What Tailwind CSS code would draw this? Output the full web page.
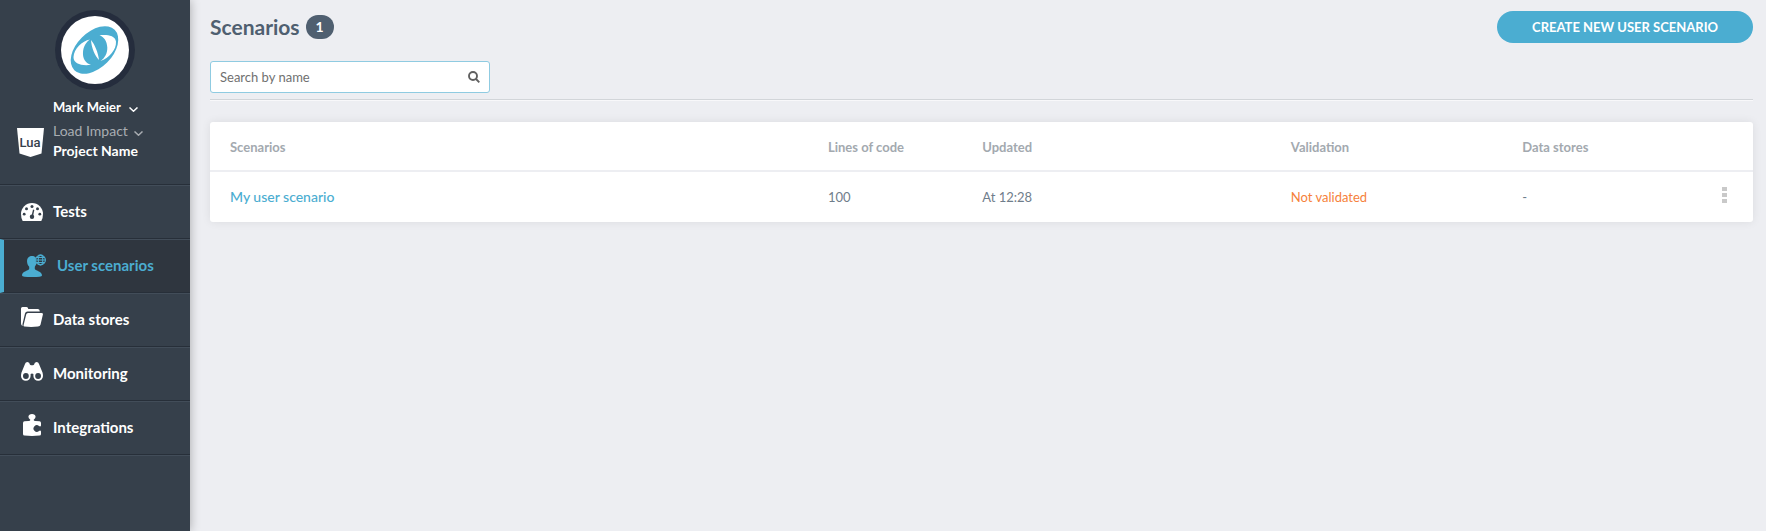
<!DOCTYPE html>
<html lang="en">
<head>
<meta charset="utf-8">
<meta name="viewport" content="width=device-width, initial-scale=1">
<title>User scenarios</title>
<script src="https://cdn.jsdelivr.net/npm/@tailwindcss/browser@4"></script>
</head>
<body class="flex min-h-screen bg-[#edeef2] font-['Lato',sans-serif] text-[13px] text-[#6f7d8b]">
<aside class="flex w-[190px] shrink-0 flex-col bg-[#36404b] text-white shadow-[0_0_10px_rgba(0,0,0,0.3)]">
  <div class="flex h-[185px] flex-col pt-[10px]">
    <svg class="size-20 self-center" viewBox="0 0 80 80" role="img" aria-label="Load Impact">
      <circle cx="40" cy="40" r="40" fill="#252d3d"/>
      <circle cx="40" cy="40" r="34" fill="#fff"/>
      <ellipse cx="39.5" cy="40" rx="28.5" ry="17.8" transform="rotate(-45 39.5 40)" fill="#4badd1"/>
      <path fill="#fff" d="M35 29.500C27 31 19 39 18.500 47C18.300 54 27 56 36 54.800C30 53 27.500 48 28 42C28.300 37 31 32 35 29.500ZM44.500 25.300C51 24.500 60 25 61 31.500C61.500 40 54 48 45.500 51C50 48 52.500 43 52.300 37.500C52 31 49 27 44.500 25.300ZM36 30C40 35 43 42 44 50C40 46 36.500 38 36 30Z"/>
    </svg>
    <div class="flex pt-[7px]">
      <svg class="mt-[31px] ml-[17px] h-[30px] w-[27px]" viewBox="0 0 27 30" role="img" aria-label="Lua">
        <path fill="#fff" d="M0 0H27L24.500 25.500L13.500 29L2.500 25.500Z"/>
        <text x="13" y="19" text-anchor="middle" fill="#36404b" class="font-['Roboto',sans-serif] text-[13px] font-medium">Lua</text>
      </svg>
      <div class="flex flex-col items-start pl-[9px]">
        <button type="button" class="flex items-center gap-2 text-[13px] leading-5 font-bold">Mark Meier
          <svg class="mt-1 h-[5px] w-[9px]" viewBox="0 0 9 5" fill="none" stroke="currentColor" stroke-width="1.500"><path d="M.5 .5L4.500 4.200L8.500 .5"/></svg>
        </button>
        <button type="button" class="mt-1 flex items-center gap-[6px] text-sm leading-5 text-[#a9adb2]">Load Impact
          <svg class="mt-1 h-[5px] w-[9px]" viewBox="0 0 9 5" fill="none" stroke="currentColor" stroke-width="1.500"><path d="M.5 .5L4.500 4.200L8.500 .5"/></svg>
        </button>
        <span class="text-sm leading-5 font-bold">Project Name</span>
      </div>
    </div>
  </div>
  <nav class="flex flex-col border-b border-[#424d59] text-[15px] font-bold">
    <a href="#" class="flex h-[54px] items-center border-t border-b border-t-[#424d59] border-b-[#272f39] pb-[2px] pl-[21px] shadow-[0_-1px_0_#272f39]">
      <svg class="mt-[2px] mr-[10px] h-[18px] w-[22px]" viewBox="0 0 22 18">
        <path fill="currentColor" d="M11 0A11 11 0 0 1 22 11Q22 15 20.300 18H1.700Q0 15 0 11A11 11 0 0 1 11 0Z"/>
        <g fill="#36404b"><circle cx="3.200" cy="11.200" r="1.400"/><circle cx="5.500" cy="5.800" r="1.500"/><circle cx="11" cy="3.500" r="1.500"/><circle cx="16.500" cy="5.800" r="1.500"/><circle cx="18.800" cy="11.200" r="1.400"/><circle cx="11" cy="13.800" r="2.200"/><path d="M12 6.500L13.300 6.900L11.900 14H10.300Z"/></g>
      </svg>
      Tests</a>
    <a href="#" aria-current="page" class="flex h-[54px] items-center border-t border-b border-l-4 border-t-[#424d59] border-b-[#272f39] border-l-[#4badd1] bg-[#2f363f] pb-[2px] pl-[18px] text-[#4badd1]">
      <svg class="mt-[2px] mr-[11px] h-6 w-6" viewBox="0 0 24 24">
        <path fill="currentColor" d="M10 2C13.500 2 15.300 4.500 14.900 8C14.600 10.300 13.500 11.700 12.800 12.700V15C14 17 20 17.300 20 21.500Q20 23 10 23Q0 23 0 21.500C0 17.300 6 17 7.200 15V12.700C6 11.500 5.300 10 5.100 8C4.800 4.500 6.500 2 10 2Z"/>
        <circle cx="19" cy="6" r="5.500" fill="#2f363f"/>
        <g fill="none" stroke="currentColor" stroke-width="1.100"><circle cx="18.500" cy="6" r="4.900"/><ellipse cx="18.500" cy="6" rx="2.300" ry="4.900"/><path d="M13.800 6H23.300M14.600 3.500H22.400M14.600 8.500H22.400"/></g>
      </svg>
      User scenarios</a>
    <a href="#" class="flex h-[54px] items-center border-t border-b border-t-[#424d59] border-b-[#272f39] pb-[2px] pl-[21px]">
      <svg class="mr-[10px] mb-1 h-5 w-[22px]" viewBox="0 0 22 20" fill="currentColor">
        <path d="M0 1.500Q0 0 1.500 0H5.500Q7 0 7.300 2H17Q18.800 2 18.800 4.500H6.500Q4.500 4.500 4 6.500L1.500 17V19Q0 18 0 16.500Z"/>
        <path d="M7 6H20.500Q22.200 6 21.900 7.500L19.500 17.800Q19 19.500 17 19.600Q10 20.200 3.500 19.600Q2.200 19.400 2.600 18L5.200 7.500Q5.500 6 7 6Z"/>
      </svg>
      Data stores</a>
    <a href="#" class="flex h-[54px] items-center border-t border-b border-t-[#424d59] border-b-[#272f39] pb-[2px] pl-[21px]">
      <svg class="mr-[10px] mb-1 h-[19px] w-[22px]" viewBox="0 0 22 19">
        <path fill="currentColor" d="M4 2Q4.500 0 6.500 0Q8.500 0 9 2.800Q11 3.800 13 2.800Q13.500 0 15.500 0Q17.500 0 18 2L21.500 10.500Q22 12 22 14A4.800 4.800 0 0 1 12.400 14V12Q11 11 9.600 12V14A4.800 4.800 0 0 1 0 14Q0 12 .5 10.500Z"/>
        <circle cx="4.900" cy="14" r="2.900" fill="#36404b"/><circle cx="17.100" cy="14" r="2.900" fill="#36404b"/>
      </svg>
      Monitoring</a>
    <a href="#" class="flex h-[54px] items-center border-t border-b border-t-[#424d59] border-b-[#272f39] pb-[2px] pl-[23px]">
      <svg class="mr-3 mb-1 h-[22px] w-[18px]" viewBox="0 0 18 22">
        <path fill="currentColor" d="M0 9Q0 7.300 1.500 7.200L5.500 7Q7.500 6.800 7.300 5.800Q5.400 4.300 5.400 2.800Q5.800 0 9 0Q12.200 0 12.600 2.800Q12.600 4.300 10.700 5.800Q10.500 6.800 12.500 7L16.500 7.200Q18 7.300 18 9V11.500Q17.500 13 16 12A3.300 3.300 0 1 0 16 17Q17.500 16 18 17.500V20Q18 21.500 16.500 21.600Q9 22.300 1.500 21.600Q0 21.500 0 20Z"/>
      </svg>
      Integrations</a>
  </nav>
</aside>
<main class="min-w-0 flex-1 pt-[11px] pr-[13px] pl-5">
  <header class="flex items-start justify-between">
    <div class="flex h-8 items-center gap-[6px]">
      <h1 class="text-[21px] leading-8 font-bold text-[#4f5f70]">Scenarios</h1>
      <span class="rounded-full bg-[#4f5f70] px-[10px] text-sm leading-6 font-bold text-white">1</span>
    </div>
    <button type="button" class="h-8 rounded-full bg-[#4badd1] px-[35px] pt-[2px] text-[13px] font-bold text-white">CREATE NEW USER SCENARIO</button>
  </header>
  <form class="mt-[18px] border-b border-[#d2d5d9] pb-[6px] shadow-[0_1px_0_#f8f8fa]">
    <div class="flex h-8 w-[280px] items-center rounded-[3px] border border-[#8fcbe1] bg-white pr-[9px] pl-[9px]">
      <input type="text" aria-label="Search by name" placeholder="Search by name" class="min-w-0 flex-1 pt-[2px] text-[13px] text-[#555] outline-none placeholder:text-[#707070]">
      <button type="submit" aria-label="Search"><svg class="size-3" viewBox="0 0 12 12" fill="none" stroke="#606060" stroke-width="1.900"><circle cx="5" cy="5" r="4"/><path d="M8 8L11.300 11.300"/></svg></button>
    </div>
  </form>
  <div class="mt-[22px] rounded-[3px] bg-white shadow-[0_0_10px_rgba(0,0,0,0.08)]">
    <table class="w-full table-fixed text-left">
      <thead>
        <tr class="h-[49px] border-b-2 border-[#edeef2] text-[#a3a9af]">
          <th scope="col" class="px-5 pt-1 font-bold">Scenarios</th>
          <th scope="col" class="w-[10%] px-5 pt-1 font-bold">Lines of code</th>
          <th scope="col" class="w-[20%] px-5 pt-1 font-bold">Updated</th>
          <th scope="col" class="w-[15%] px-5 pt-1 font-bold">Validation</th>
          <th scope="col" class="w-[12%] px-5 pt-1 font-bold">Data stores</th>
          <th scope="col" class="w-[4.25%]"></th>
        </tr>
      </thead>
      <tbody>
        <tr class="h-[51px]">
          <td class="px-5"><a href="#" class="text-sm font-medium text-[#4badd1]">My user scenario</a></td>
          <td class="px-5 pt-[2px]">100</td>
          <td class="px-5 pt-[2px]">At 12:28</td>
          <td class="px-5 pt-[2px] text-[#f6813a]">Not validated</td>
          <td class="px-5 pt-[2px]">-</td>
          <td class="pr-[26px]"><button type="button" aria-label="Row actions" class="ml-auto flex flex-col gap-[2px] pb-1"><span class="h-[4px] w-[5px] bg-[#c9c9c9]"></span><span class="h-[4px] w-[5px] bg-[#c9c9c9]"></span><span class="h-[4px] w-[5px] bg-[#c9c9c9]"></span></button></td>
        </tr>
      </tbody>
    </table>
  </div>
</main>
</body>
</html>
